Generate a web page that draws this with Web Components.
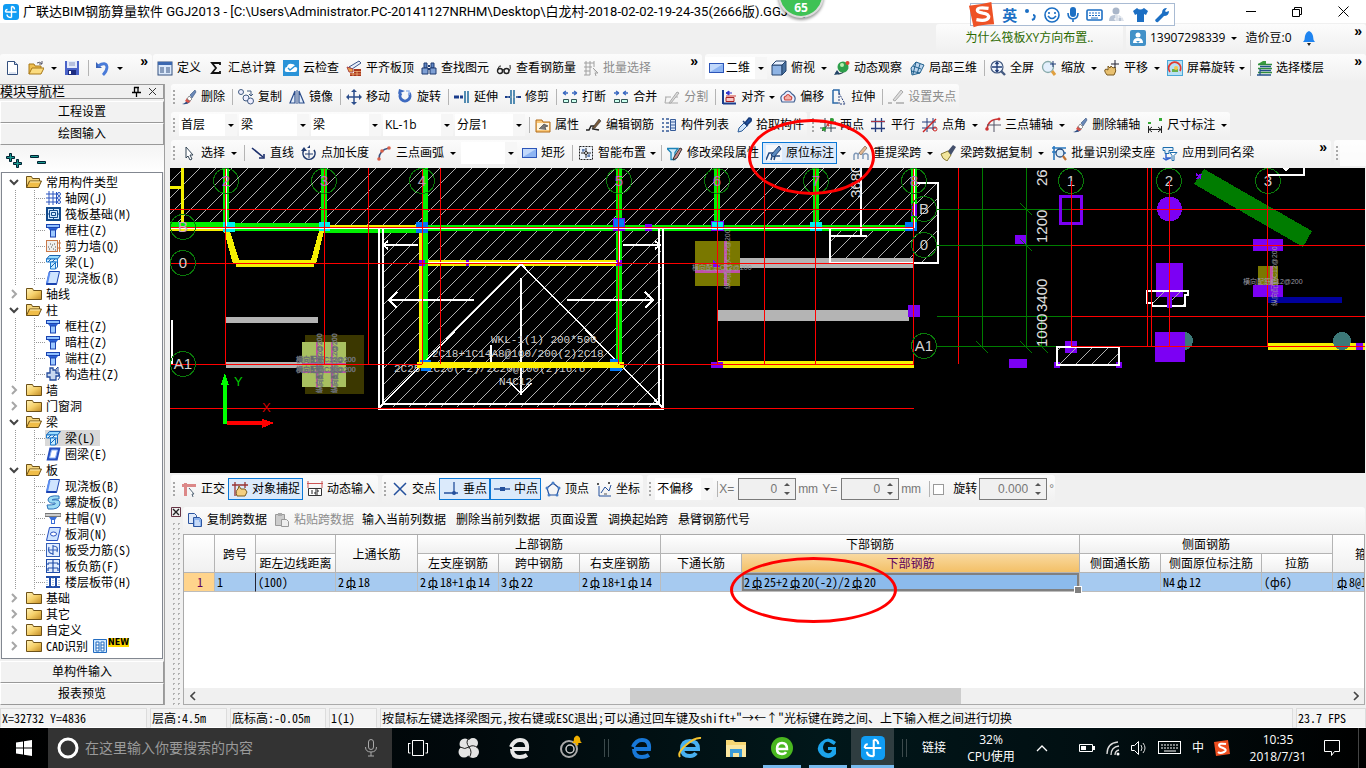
<!DOCTYPE html>
<html lang="zh-CN">
<head>
<meta charset="utf-8">
<title>广联达BIM钢筋算量软件 GGJ2013</title>
<style>
  html, body { margin: 0; height: 100%; background: #f0f0f0; }
  body { font: 12px/16px "Open Sans", "Noto Sans CJK SC", sans-serif; color: #000; overflow: hidden; }
</style>
</head>
<body>
<ggj-app></ggj-app>
<script>
/* ---------- icon set, drawn on a 16x16 grid ---------- */
const brush = '<path d="M1 15q4-1 5-4l3 2q-3 3-8 2" fill="#2a4a80"/><path d="M6 9l4 3-3 2-3-2z" fill="#d9534a"/><path d="M8 7l3 3-2 2-3-2z" fill="#fff" stroke="#555" stroke-width=".6"/><path d="M9 6l5-5 1 2-4 6z" fill="#6b89b8" stroke="#34507e" stroke-width=".6"/>';
const pencil = '<path d="M7 10l6-8 2 2-6 7-3 1z" fill="#7a5a3a" stroke="#333" stroke-width=".6"/>';
const column = '<rect x="1.5" y="2.5" width="13" height="3" fill="#8fc0ff" stroke="#1a43b0"/><path d="M3 6h10l-2 2.5h-6z" fill="#2a62d8"/><rect x="5.5" y="8" width="5" height="7" fill="#9cc8ff" stroke="#1a43b0"/>';
const slab = '<path d="M4.5 1.5h10l-3 13h-10z" fill="#cfe4ff" stroke="#1a43b0"/><path d="M2 13.5l2.500-11" stroke="#5b8df0" stroke-width="2"/><path d="M1.500 14h10" stroke="#1a43b0" stroke-width="2"/>';
const beam = '<path d="M1.500 5l3-3.500h11l-3 3.500z" fill="#9adcff" stroke="#1a62b0"/><path d="M1.500 5h11v3h-11z" fill="#e4f6ff" stroke="#1a7ad0"/><path d="M5.500 8h5v7h-5z" fill="#c9ecff" stroke="#1a7ad0"/><path d="M10.500 15l2-2V8" fill="none" stroke="#1a62b0"/><path d="M3 8l3-3M7 8l3-3M6 13l4-4" stroke="#1a62b0"/>';
const ICONS = {
  app: '<rect width="16" height="16" rx="3" fill="#109cf3"/><path d="M8.500 2.500v11M2.500 8h11M8.500 2.500q3 0 3 3M4 10.500q0 3 4.500 3M4.500 5.500q-2 0-2 2.500" fill="none" stroke="#fff" stroke-width="1.4"/>',
  file: '<path d="M3.500 1.500h7l3 3v10h-10z" fill="#fff" stroke="#34507e"/><path d="M10.500 1.500v3h3" fill="#cfdcf0" stroke="#34507e"/><path d="M5 13h7" stroke="#b8c8e4"/>',
  open: '<path d="M1 14V4h5l1 2h6v2" fill="#f0c050" stroke="#a87818"/><path d="M1 14l3-6h12l-3 6z" fill="#fbdc80" stroke="#a87818"/><path d="M9 3q3-2 5 1M14 1v3h-3" fill="none" stroke="#556"/>',
  save: '<path d="M1 1h14v14H1z" fill="#4a63c8"/><path d="M3 1h10v7H3z" fill="#e4ebfa"/><path d="M5 3h6M5 5h6" stroke="#8894c0"/><path d="M4 10h8v5H4z" fill="#1d2c80"/><path d="M5 11h2v3H5z" fill="#fff"/>',
  undo: '<path d="M2 2v6h6z" fill="#3a63b8"/><path d="M4 6q8-5 9 1q0 4-4 8" fill="none" stroke="#4a7bd8" stroke-width="2.8"/>',
  define: '<rect x="1" y="2" width="14" height="13" fill="#dbe9fb" stroke="#34507e"/><path d="M1 2h14v3H1z" fill="#3c68b0"/><path d="M3 8h4M3 10h4M3 12h4M9 8h4M9 10h4M9 12h4" stroke="#34507e"/>',
  sigma: '<path d="M12 5V3H4l4 5-4 5h8v-2" fill="none" stroke="#111" stroke-width="1.8"/>',
  cloud: '<rect width="16" height="16" fill="#2a93d8"/><path d="M4 12q-3 0-2-3q0-2 2-2q1-4 5-3q3 0 3 3q3 0 2 3q0 2-2 2z" fill="#fff"/><path d="M5 8l2 2 5-4" fill="none" stroke="#2a93d8" stroke-width="1.4"/>',
  align: '<path d="M3 7l10-6 2 2-9 6z" fill="#e8eefa" stroke="#3a5488"/><path d="M1 7l6 2v3H3z" fill="#eda64a" stroke="#a44"/><path d="M8 9h7v7H4v-3h4z" fill="#a8341c"/><path d="M4 14h11M7 13v3M11 11v5M8 11.500h7" stroke="#f8c080" stroke-width=".7"/>',
  find: '<path d="M3 3h3v5H3zM10 3h3v5h-3z" fill="#5f86c4" stroke="#1e3a70"/><path d="M1 8h6v6H1zM9 8h6v6H9z" fill="#7fa0d4" stroke="#1e3a70"/><path d="M7 9h2M7 6h2" stroke="#1e3a70" stroke-width="2"/>',
  view: '<circle cx="4" cy="11" r="2.500" fill="none" stroke="#222" stroke-width="1.4"/><circle cx="10.500" cy="11" r="2.500" fill="none" stroke="#222" stroke-width="1.4"/><path d="M6 10q1-1 2 0M2 9q1-4 3-3M13 11q2-2 1-6" fill="none" stroke="#222"/>',
  batch: '<g stroke="#a0a0a0" fill="none"><path d="M1 3h10M1 7h8M1 11h6M1 15h6M3 1v14M7 1v14M11 1v6"/><path d="M10 8l5 5h-3l1 3" fill="#ddd"/></g>',
  rect: '<rect x="1.500" y="3.500" width="14" height="9" fill="#8db4f2" stroke="#2c55b8"/><path d="M2 4h13l-13 8z" fill="#c2d9fb"/>',
  cube: '<path d="M1 5h10v10H1z" fill="#8fb4e4" stroke="#26456e"/><path d="M1 5l4-4h10l-4 4z" fill="#e9f2ff" stroke="#26456e"/><path d="M11 5l4-4v10l-4 4z" fill="#47709f" stroke="#26456e"/>',
  orbit: '<path d="M2 12q1 3 6 1l6-5" fill="none" stroke="#345" stroke-width="1.2"/><circle cx="9" cy="7" r="5.500" fill="#2f9f4b"/><circle cx="8" cy="5" r="2" fill="#b8f0b0"/><circle cx="13.500" cy="3" r="2" fill="#e04430"/><path d="M0 15l3-5 3 4z" fill="#246"/>',
  part3d: '<path d="M2 8l5-6 8 3-4 8-8 2z" fill="#bcd5ee" stroke="#20608c"/><path d="M4 6l8 3M7 2l-3 12M11 4l-3 10M2 11l9 2" stroke="#20608c" fill="none"/>',
  full: '<circle cx="7" cy="7" r="6" fill="#edf4fd" stroke="#445a80" stroke-width="1.2"/><path d="M7 2v10M2 7h10M5.500 4L7 2l1.500 2M5.500 10L7 12l1.500-2" fill="none" stroke="#223e78" stroke-width="1.3"/><path d="M11 11l4 4" stroke="#445a80" stroke-width="2.4"/>',
  zoom: '<circle cx="7" cy="7" r="5.500" fill="#e3effc" stroke="#8aa" stroke-width="1.3"/><path d="M12 1v6M9 4h6" stroke="#223e78"/><path d="M11 11l3 4" stroke="#e0a040" stroke-width="3"/>',
  pan: '<path d="M3 15q-4-5-1-6l2 1V6l2 2 1-2 2 2 2-1q2 4-1 8z" fill="#e8c070" stroke="#7a5a20"/><path d="M11 0v8M7 4h8" stroke="#223"/>',
  spin: '<rect x=".5" y=".5" width="15" height="15" fill="#b8e0f4" stroke="#48a8d8"/><path d="M3 12A6 6 0 1 1 13 11" fill="none" stroke="#e03a30" stroke-width="1.8"/><path d="M5 9h6v3H5z" fill="#6ab04a"/><circle cx="9" cy="8" r="2" fill="#f4c84a"/>',
  floors: '<path d="M2 4l5-3h3v3z" fill="#3c9c40"/><path d="M2 4.500h14M2 8.500h14M2 12.500h14" stroke="#2f8d3c" stroke-width="1.5"/><path d="M4 9v6M1 15h14M4 6.500h11M4 10.500h11" stroke="#24528c" stroke-width="1.3"/>',
  brush,
  copy: '<g fill="#eef" stroke="#405a80"><circle cx="3" cy="3" r="2.500"/><circle cx="8" cy="9" r="3"/><circle cx="12.500" cy="12" r="3"/></g><path d="M9 2h4v4M11 5l2 2 2-2" fill="none" stroke="#405a80"/>',
  mirror: '<path d="M6 2v12H1zM10 2v12h5z" fill="#e4eefb" stroke="#2c4e8c" stroke-width="1.2"/><path d="M8 1v14" stroke="#2c4e8c"/>',
  move: '<path d="M8 2v12M2 8h12" stroke="#2c4e8c" stroke-width="1.5"/><path d="M8 0l3 3H5zM8 16l3-3H5zM0 8l3-3v6zM16 8l-3-3v6z" fill="#2c4e8c"/>',
  rotate: '<path d="M4 4a5 5 0 1 0 8 0" fill="none" stroke="#3e6ac0" stroke-width="3"/><path d="M1 5l1-5 6 2z" fill="#3e6ac0"/><path d="M9 2h3v4" stroke="#9ab8ec" fill="none" stroke-width="1.5"/>',
  extend: '<path d="M0 8h9" stroke="#1a3c8c" stroke-width="3" stroke-dasharray="5 1"/><path d="M11 2v12M14 2v12" stroke="#1e6a9c" stroke-width="1.5"/>',
  trim: '<path d="M0 8h5M11 8h5" stroke="#1a3c8c" stroke-width="2"/><path d="M6 1v14M9 1v14" stroke="#1e6a9c" stroke-width="1.5"/><path d="M2 8h12" stroke="#8ab" stroke-dasharray="2 1"/>',
  brk: '<path d="M1 4h5M10 4h5M1 4l3-2M1 4l3 2M15 4l-3-2M15 4l-3 2" stroke="#3a68c0" stroke-width="1.3"/><path d="M1.500 10.500h5v3h-5zM9.500 10.500h5v3h-5z" fill="#cfe" stroke="#355"/>',
  join: '<path d="M1 4h5M10 4h5M6 4L3 2M6 4L3 6M10 4l3-2M10 4l3 2" stroke="#3a68c0" stroke-width="1.3"/><path d="M1.500 10.500h5v3h-5zM8.500 10.500h6v3h-6z" fill="#cfe" stroke="#355"/>',
  split: '<g stroke="#aaa" fill="none"><path d="M1 8h6M1 14h13M2 8l-1 6M10 8l4 0"/><path d="M5 14l8-11 2 1-8 10z" fill="#ddd"/></g>',
  left: '<path d="M2 1v14M2 14.500h13" stroke="#1a3c8c" stroke-width="2"/><path d="M5 7h10" stroke="#c33"/><path d="M5 4l3-2v4zM5 4h6" stroke="#33c" fill="#33c"/><path d="M5 8.500h8v4H5z" fill="#f8c8c8" stroke="#a22"/>',
  offset: '<path d="M2 13q-3-6 2-8q4-6 8 0q5 3 2 8z" fill="#eef" stroke="#406090" stroke-width="1.2"/><path d="M5 11q-2-3 1-4q2-3 4 0q3 1 1 4z" fill="#f6b0a8" stroke="#c8463c" stroke-width="1.2"/>',
  stretch: '<path d="M2 1h6v3M2 1v13h5" fill="none" stroke="#2c6aa8" stroke-width="1.5"/><path d="M8 4l6 11M8 4v11h6" fill="none" stroke="#28407c" stroke-dasharray="2 1"/>',
  grip: '<g stroke="#aaa"><path d="M0 14h4M8 14h8" stroke-width="1.5"/><path d="M5 11l8-10 2 2-8 9z" fill="#ddd"/></g>',
  prop: '<path d="M1 3h6l1 2h7v10H1z" fill="#fbc878" stroke="#b06a18"/><path d="M2 6h12v7H2z" fill="#fff6e0"/><path d="M4 12l5-5 4 2-3 1 1 3" fill="#777" stroke="#333" stroke-width=".6"/>',
  editbar: '<path d="M0 13h3l2-4h3l-1 3 6 1" fill="none" stroke="#222" stroke-width="1.5"/>' + pencil,
  list: '<path d="M1 2h2M5 2h3M1 6h2M5 6h3M1 10h2M5 10h3M1 14h2M5 14h3" stroke="#345a98" stroke-width="1.6"/><path d="M9.500 2.500h5v11h-5z" fill="#dce8fa" stroke="#345a98"/><path d="M10 5h4M10 8h4M10 11h4" stroke="#345a98"/>',
  pick: '<path d="M2 15l1-4 5-5 3 3-5 5z" fill="#cfe4fa" stroke="#2c5c98"/><path d="M7 4l5 5M9 6l4-5q3 0 2 3l-4 4" fill="#2456a8" stroke="#183c78" stroke-width="1.5"/>',
  twopt: '<path d="M0 5h16M0 11h16M5 1v14M11 1v14" stroke="#345" /><path d="M2 14L13 2" stroke="#333"/><circle cx="4" cy="12" r="2" fill="#2a9c30"/><circle cx="12" cy="3" r="2" fill="#2a9c30"/><path d="M7 7l2 2" stroke="#d33" stroke-width="2"/>',
  parallel: '<path d="M0 4.500h14M0 11.500h14M4.500 1v14M10.500 1v14" stroke="#243c7c" stroke-width="1.3"/><path d="M0 4.500h14" stroke="#a34"/>',
  ptangle: '<path d="M0 5h14M0 11h14M5 1v14M11 1v12" stroke="#243c7c"/><path d="M1 15L14 2" stroke="#c22" stroke-width="1.4"/><circle cx="13" cy="12" r="2" fill="none" stroke="#c22"/>',
  arcaxis: '<path d="M2 12q1-10 12-10" fill="none" stroke="#c33" stroke-width="1.5"/><path d="M2 8h14M9 3v12" stroke="#556"/><circle cx="2" cy="12" r="1.800" fill="#c33"/><circle cx="14" cy="2" r="1.500" fill="#c33"/>',
  dim: '<path d="M1.500 9v7M14.500 9v7M2 12.500h12" stroke="#222"/><path d="M5 10l-3 2.500 3 2.500M11 10l3 2.500-3 2.500" fill="none" stroke="#222"/><path d="M1 5h3v2H1zM12 1h3v3h-3z" fill="#3a3"/>',
  cursor: '<path d="M5 2l7 8H9l2 4-2 1-2-4-2 2z" fill="#fff" stroke="#345"/>',
  line: '<path d="M2 3l11 9" stroke="#1c2f6c" stroke-width="1.6"/><path d="M14 9v4h-5" fill="none" stroke="#1c2f6c" stroke-width="1.6"/>',
  ptlen: '<path d="M3 5a6 6 0 1 0 10 0" fill="none" stroke="#223c70" stroke-width="1.6"/><path d="M8 5v8M4 9h8" stroke="#223c70"/><path d="M0 6l3-4 3 4zM6 3h3V0" fill="#223c70"/>',
  arc3: '<path d="M3 14q0-9 10-11" fill="none" stroke="#3a4f7c" stroke-width="1.5"/><circle cx="3" cy="14" r="1.800" fill="#d9604a"/><circle cx="6" cy="6" r="1.800" fill="#d9604a"/><circle cx="13" cy="3" r="1.800" fill="#d9604a"/>',
  smart: '<rect x="1.500" y="1.500" width="13" height="13" fill="#eef4fc" stroke="#222" stroke-dasharray="2 1"/><path d="M8 3v10M3 8h10" stroke="#222"/><path d="M5 4v3M11 9v3M4 5h3M9 11h3" stroke="#335a9c"/><circle cx="8" cy="8" r="1.500" fill="#fff" stroke="#222"/>',
  beamedit: '<path d="M0 3.500h11l-3 4v7H4v-7z" fill="#d4ecfa" stroke="#1c84b8" stroke-width="1.3"/><path d="M7 12l6-9 2 1-5 9-4 2z" fill="#c88" stroke="#333"/>',
  insitu: '<path d="M0 0h16v16H0z" fill="#f4f7fb"/><path d="M0 15l3-7h4l-2 7M8 15l1-4h5" fill="none" stroke="#234a80" stroke-width="1.5"/><path d="M5 10l8-9 2 3-7 8z" fill="#5a8ac0" stroke="#1c3d70"/>',
  respan: '<path d="M1 15v-5q1-3 4-1v5M5 10q2-4 5-1v5M10 10q3-3 5 0v5" fill="none" stroke="#8099b8" stroke-width="1.5"/><path d="M6 8l6-7 2 2-6 7z" fill="#e4b890" stroke="#987"/>',
  broom: '<path d="M1 9l7-3 3 4-4 6q-5-2-6-7" fill="#f2e69c" stroke="#887a30"/><path d="M8 6l5-6 3 2-5 8z" fill="#44506c"/>',
  recog: '<path d="M1 3h14M1 7h5M11 8h4M3 1v14" stroke="#2878c0" stroke-width="1.6"/><circle cx="9" cy="8" r="4" fill="#dcecf8" stroke="#244c80" stroke-width="1.3"/><path d="M12 11l3 4" stroke="#c07030" stroke-width="2.2"/>',
  apply: '<path d="M1 2.500h10v3H7v3H3v-3H1z" fill="#e4f0fa" stroke="#1c6cac"/><path d="M8 7.500h7l-3 3v5h-2v-5z" fill="#fff" stroke="#1c6cac"/><path d="M4 9v4h5M1 13l3 2 4-2" stroke="#3566d0" fill="none" stroke-width="1.5"/>',
  ortho: '<path d="M1 4.500h14M4.500 2v13" stroke="#dc8888" stroke-width="3"/><path d="M8 7l5 6h-2l1 3" fill="#fff" stroke="#567"/>',
  snap: '<path d="M0 4h16M3 1v14M13 1v6" stroke="#933" stroke-width="1.3"/><path d="M5 15q-2-5 1-7l1-3 2 3h4l2 3-2 4z" fill="#f4cf80" stroke="#7a5a20"/>',
  dyn: '<path d="M0 2.500h16M1 0v7M15 0v7" stroke="#c55"/><path d="M1.500 7.500h13v7h-13z" fill="#fff" stroke="#333"/><path d="M5 9v4M8 9h3v2H8v2h3" fill="none" stroke="#222"/>',
  cross: '<path d="M2 2l12 12M14 2L2 14" stroke="#24509c" stroke-width="1.5"/>',
  perp: '<path d="M1 12h14" stroke="#24509c" stroke-width="1.5"/><path d="M11 1v11" stroke="#24509c" stroke-width="1.3"/><circle cx="11" cy="12" r="2" fill="#24509c"/>',
  mid: '<path d="M0 8h16" stroke="#24509c" stroke-width="1.4"/><path d="M6 6h5v4H6z" fill="#24509c"/>',
  penta: '<path d="M8 2l6 5-2 7H4L2 7z" fill="none" stroke="#24509c" stroke-width="1.2"/><g fill="#4a80c8"><circle cx="8" cy="2" r="1.500"/><circle cx="14" cy="7" r="1.500"/><circle cx="2" cy="7" r="1.500"/><circle cx="4" cy="14" r="1.500"/><circle cx="12" cy="14" r="1.500"/></g>',
  coord: '<path d="M3 5v10h12" fill="none" stroke="#24509c"/><path d="M5 12l4-6 4 4 2-6" fill="none" stroke="#24509c"/><path d="M1 2l2 2M3 2L1 4M12 1l2 2M14 1l-2 2M8 13h3" stroke="#555"/>',
  pages: '<path d="M1.500 1.500h6l2 2v8h-8z" fill="#dfeafa" stroke="#2c55a0"/><path d="M6.500 5.500h6l2 2v7h-8z" fill="#8db4ee" stroke="#2c55a0"/><path d="M8 9h4M8 11h5M8 13h5" stroke="#fff"/>',
  paste: '<path d="M1.500 2.500h9v11h-9z" fill="#ccc" stroke="#999"/><path d="M4 1h4v3H4z" fill="#aaa"/><path d="M7.500 7.500h5l2 2v5h-7z" fill="#eee" stroke="#999"/>',
  folder: '<defs><linearGradient id="g" x1="0" y1="0" x2="1" y2="1"><stop offset="0" stop-color="#fff2b8"/><stop offset=".5" stop-color="#f5cf68"/><stop offset="1" stop-color="#c08a24"/></linearGradient></defs><path d="M.5 13.500v-11h6l1 2h8v9z" fill="url(#g)" stroke="#6e5218"/>',
  folderopen: '<path d="M.5 13.500v-11h5l1 2h7v3" fill="#f6d67c" stroke="#6e5218"/><path d="M.5 13.500l3-6.500h12l-3 6.500z" fill="#f0bd48" stroke="#6e5218"/><path d="M4 8h10" stroke="#fdeeb4"/>',
  axis: '<path d="M4 1v14M8 1v14M1 4h14M1 8h13M1 12h12M11.500 2v12" stroke="#2a54c0" fill="none"/><circle cx="14" cy="4" r="1.500" fill="#fff" stroke="#2a54c0"/><circle cx="14" cy="8" r="1.500" fill="#fff" stroke="#2a54c0"/><circle cx="14" cy="12" r="1.500" fill="#fff" stroke="#2a54c0"/>',
  raft: '<rect x="2" y="2" width="13" height="12" fill="#d5eaff" stroke="#124a8c" stroke-width="2"/><path d="M4.500 4.500h8v7h-8zM6.500 6.500h4v3h-4zM2 8h3M12 8h3M8.500 1v3M8.500 12v3" fill="none" stroke="#124a8c"/>',
  column, slab, beam,
  wall: '<rect x="1.500" y="2.500" width="11" height="11" fill="#eee" stroke="#c87848"/><path d="M4 11h1M6 9h1M8 11h1M9 6h1M5 6h1M10 9h1M7 7h1M10 12h1M3 9h1" stroke="#555"/><path d="M14.500 2v12M13 5h3M13 10h3" stroke="#c87848"/>',
  gz: '<path d="M5 2h3v2h3v3h3v3h-3v4H5v-3H2V7h3z" fill="#c8d8f0" stroke="#264c9c" stroke-width="1.3"/><path d="M11 3l2-2v5M14 8l1 3-2 3" stroke="#264c9c" fill="none"/>',
  ring: '<path d="M4.500 1.500h11l-3 13h-11z" fill="#264fc0"/><path d="M6.500 4h6l-2 8h-6z" fill="#fff" stroke="#88b0f8"/>',
  spiral: '<path d="M14 2Q3 1 3 6q1 4 7 3q2 2-8 2l1 4q12 1 12-6q0-4-8-3q0-1 7-1z" fill="#9fdcf4" stroke="#2c70b8"/>',
  cap: '<path d="M0 3.500h16v3H0z" fill="#ccc" stroke="#777"/><path d="M4 7h8l-2 3v4H6v-4z" fill="#3a6ed8"/><path d="M7 10h2v3H7z" fill="#fff"/>',
  hole: '<path d="M4.500 1.500h11l-3 13h-11z" fill="#cfe4ff" stroke="#264fc0"/><ellipse cx="8.500" cy="8" rx="3" ry="2" fill="#fff" stroke="#264fc0"/>',
  rebar: '<rect x="1.500" y="1.500" width="13" height="13" fill="#e4efff" stroke="#3560b8"/><path d="M8 3v10M3 8h10M4 5q-2 6 4 7M8 4q6 0 4 6" fill="none" stroke="#3560b8" stroke-width="1.2"/>',
  negbar: '<rect x="1.500" y="1.500" width="13" height="13" fill="#e4efff" stroke="#1f4ca8"/><path d="M8 2v12M3 5h10M3 10h10M3 5v2M13 5v2M3 10v3M13 10v3" fill="none" stroke="#1f4ca8" stroke-width="1.2"/>',
  band: '<path d="M1 3h14M1 13h14" stroke="#1f4ca8" stroke-width="2"/><path d="M5 3v10M11 3v10" stroke="#1f4ca8" stroke-width="2"/><path d="M2 6v6M8 4v9M14 6v6" stroke="#69c" stroke-dasharray="1 1"/>',
  bell: '<path d="M2 12q2-2 2-6q1-4 4-5q3 1 4 5q0 4 2 6z" fill="#1f84f0"/><path d="M6 13h4l-2 3z" fill="#222"/>',
  user: '<rect width="16" height="16" rx="2" fill="#4291c8"/><circle cx="8" cy="5" r="2.500" fill="#fff"/><path d="M3 13q0-5 5-5t5 5z" fill="#fff"/><path d="M6 11h4l-2 2z" fill="#4291c8"/>',
  cad: '<path d="M1.500 1.500h13v13h-13z" fill="#cfe8ff" stroke="#246cc0"/><path d="M4 4h3v9H4zM9 4h3v9H9z" fill="#fff" stroke="#246cc0"/><path d="M4 7h3M4 10h3M9 7h3M9 10h3" stroke="#246cc0"/>'
};
const svg = (name, size = 16) => `<svg width="${size}" height="${size}" viewBox="0 0 16 16" aria-hidden="true">${ICONS[name] || ''}</svg>`;

/* Base class: attaches the shadow root with the element's own styles and markup. */
class Part extends HTMLElement {
  connectedCallback() {
    if (this.shadowRoot) return;
    const t = document.createElement('template');
    t.innerHTML = `<style>*{box-sizing:border-box}svg{display:block;flex:none}button,input,select{font:inherit;color:inherit;margin:0}button{border:0;background:none;padding:0}${this.css()}</style>${this.html()}`;
    this.attachShadow({ mode: 'open' }).append(t.content.cloneNode(true));
  }
}
const define = (name, css, html) => customElements.define(name, class extends Part {
  css() { return typeof css === 'function' ? css(this) : css; }
  html() { return typeof html === 'function' ? html(this) : html; }
});
/* half-width Latin for the system-font areas */
const SYS = 'font-family:"Noto Sans CJK SC",sans-serif;font-feature-settings:"hwid";';

/* ---------- toolbar parts ---------- */
define('tool-strip', `
  :host{display:flex;align-items:center;min-width:0;height:26px;border-radius:3px;background:linear-gradient(#fcfcfc,#f0f0f0);white-space:nowrap}
  .grip{width:6px;height:16px;flex:none;background:radial-gradient(circle,#a8a8a8 1px,transparent 1px) 0 0/6px 4px}
  .more{margin-left:auto;padding-right:4px;align-self:flex-start;font:bold 14px/14px "Liberation Sans",sans-serif}`,
  el => `${el.hasAttribute('grip') ? '<span class="grip"></span>' : ''}<slot></slot>${el.hasAttribute('more') ? '<button class="more" aria-label="更多">»</button>' : ''}`);

define('tool-item', `
  :host{display:flex;align-items:center;flex:none;height:24px}
  .b{display:flex;align-items:center;gap:4px;height:22px;padding:0 3px 0 4px}
  .b.only{padding:0 4px}.b.text{padding:0 5px}
  :host([active]) .b{background:#dbeafb;box-shadow:inset 0 0 0 1px #0a78d7}
  :host([disabled]) .b{color:#8c8c8c}
  .c{width:12px;height:22px;padding:0 3px}
  .c i{display:block;border:3px solid transparent;border-top-color:#000;border-bottom:0;width:6px}
  :host([tight]) .c{width:8px;padding:0 1px}`,
  el => {
    const icon = el.getAttribute('icon'), text = el.textContent.trim();
    return `<button class="b ${!text ? 'only' : !icon ? 'text' : ''}" ${el.hasAttribute('disabled') ? 'disabled' : ''} ${text ? '' : `aria-label="${el.getAttribute('name')}"`}>${icon ? svg(icon) : ''}${text ? '<span><slot></slot></span>' : ''}</button>${el.hasAttribute('caret') || el.hasAttribute('tight') ? '<button class="c" aria-label="展开"><i></i></button>' : ''}`;
  });

define('tool-sep', `:host{display:block;flex:none;width:6px;height:16px;background:linear-gradient(#b4b4b4,#b4b4b4) 4px 0/1px 100% no-repeat}`, '');

define('tool-combo', `
  :host{display:flex;flex:none;align-items:center;width:70px;height:22px;margin-left:2px;background:#fff}
  :host([size="s"]){width:58px}
  :host([size="xs"]){width:56px}
  svg{margin:0 0 0 3px}
  select{flex:1;min-width:0;height:22px;border:0;padding:0 0 0 2px;background:none;appearance:none;outline:0}
  i{width:12px;flex:none;height:22px;background:#f6f6f6;display:grid;place-items:center}
  i::after{content:"";border:3px solid transparent;border-top-color:#000;border-bottom:0}`,
  el => `${el.hasAttribute('icon') ? svg(el.getAttribute('icon')) : ''}<select aria-label="${el.getAttribute('name')}"><option>${el.getAttribute('value')}</option></select><i></i>`);

define('num-field', `
  :host{display:flex;flex:none;align-items:center;color:#777;font:12px/16px "Liberation Sans","Noto Sans CJK SC",sans-serif}
  label{display:flex;align-items:center;gap:2px}
  .w{display:flex;width:58px;height:22px;border:1px solid #7a7a7a;background:#f0f0f0}
  :host([wide]) .w{width:68px}
  input{flex:1;min-width:0;border:0;background:none;text-align:right;padding:0 2px;outline:0}
  .s{width:16px;display:flex;flex-direction:column;justify-content:space-between;align-items:center;padding:4px 0}
  .s b{border:3px solid transparent;border-bottom:3px solid #555;border-top:0}.s b+b{border-top:3px solid #555;border-bottom:0}
  .l{min-width:17px}.u{min-width:24px}:host([wide]) .l{min-width:0}:host([wide]) .u{min-width:6px}`,
  el => `<label><span class="l">${el.getAttribute('label')}</span><span class="w"><input type="text" value="${el.getAttribute('value')}"><span class="s"><b></b><b></b></span></span><span class="u">${el.getAttribute('unit')}</span></label>`);

/* ---------- title bar ---------- */
define('title-bar', `
  :host{display:flex;align-items:center;height:23px;background:#fff;padding-left:3px;position:relative;white-space:nowrap}
  span{padding-left:4px;flex:1;font-family:Roboto,"Noto Sans CJK SC",sans-serif;font-size:13px}
  .win{display:flex}.win button{width:46px;height:23px;display:grid;place-items:center}
  .ball{position:absolute;left:778px;top:-28px;width:46px;height:46px;border-radius:50%;background:#3fc255;border:2px solid #dcdcdc;box-shadow:0 2px 3px #0006;color:#fff;font:bold 12px/14px "Open Sans",sans-serif;text-align:center;padding:27px 0 0}`,
  `${svg('app')}<span>广联达BIM钢筋算量软件 GGJ2013 - [C:\\Users\\Administrator.PC-20141127NRHM\\Desktop\\白龙村-2018-02-02-19-24-35(2666版).GGJ12]</span>
  <div class="win"><button aria-label="最小化"><svg width="10" height="10"><path d="M0 4.500h10" stroke="#000"/></svg></button><button aria-label="还原"><svg width="10" height="10"><path d="M.5 2.500h7v7h-7zM2.500 2.500v-2h7v7h-2" fill="none" stroke="#000"/></svg></button><button aria-label="关闭"><svg width="11" height="11"><path d="M.5.5l10 10M10.500.5l-10 10" stroke="#000"/></svg></button></div>
  <div class="ball">65</div>`);

define('ime-bar', `
  :host{position:absolute;left:970px;top:3px;width:205px;height:23px;background:#fff;border:1px solid #a9bbd3;display:block;z-index:2}
  div{display:flex;align-items:center;justify-content:space-between;height:21px;padding:0 4px 0 0}
  .logo{margin:0 0 0 -3px}
  b{font:bold 15px/20px "Noto Sans CJK SC",sans-serif;color:#1c6fc4}`,
  `<div><svg class="logo" width="28" height="28" viewBox="0 0 30 28"><path d="M1 4q12-1 24-4l3 24q-12 0-22 3z" fill="#ee5226"/><path d="M22 7q-12-2-12 2q0 2 6 3q7 1 6 5q-2 4-13 2" fill="none" stroke="#fff" stroke-width="3.5"/></svg>
  <b>英</b><svg width="14" height="16"><circle cx="4" cy="4" r="2" fill="#1c6fc4"/><path d="M10 8q3 0 1 4l-2 1" stroke="#1c6fc4" stroke-width="2" fill="none"/></svg>
  <svg width="16" height="16"><circle cx="8" cy="8" r="7" fill="none" stroke="#1c6fc4" stroke-width="1.6"/><path d="M5 5v2M11 5v2M4 9q4 5 8 0" stroke="#1c6fc4" stroke-width="1.6" fill="none"/></svg>
  <svg width="14" height="16"><rect x="4" y="0" width="6" height="10" rx="3" fill="#1c6fc4"/><path d="M2 6q0 6 5 6t5-6M7 12v3" fill="none" stroke="#1c6fc4" stroke-width="1.6"/></svg>
  <svg width="17" height="12"><rect x="1" y="1" width="15" height="10" rx="1" fill="none" stroke="#1c6fc4" stroke-width="1.6"/><path d="M3 4h11M3 6.500h11" stroke="#1c6fc4" stroke-dasharray="2 1"/><path d="M5 9h7" stroke="#1c6fc4"/></svg>
  <svg width="17" height="15"><circle cx="7" cy="4" r="3.500" fill="#a9b6c9"/><path d="M0 14q0-7 7-6q7 0 8 6z" fill="#b7c3d4"/><path d="M6 9h4v2H6v2h4M15 9h-3v2h3v2h-3" stroke="#fff" fill="none"/></svg>
  <svg width="15" height="14"><path d="M0 3l4-3q3 3 7 0l4 3-2 4-2-1v8H4V6L2 7z" fill="#1c6fc4"/></svg>
  <svg width="16" height="16"><path d="M1 13l7-7q0-5 5-5l-2 3 1 1 3-1q0 5-5 5l-6 6q-2 1-3-2" fill="#1c6fc4"/></svg></div>`);

/* ---------- module navigator ---------- */
const TREE = [
  ['o', '常用构件类型'], ['axis', '轴网(J)'], ['raft', '筏板基础(M)'], ['column', '框柱(Z)'], ['wall', '剪力墙(Q)'], ['beam', '梁(L)'], ['slab', '现浇板(B)'],
  ['c', '轴线'], ['o', '柱'], ['column', '框柱(Z)'], ['column', '暗柱(Z)'], ['column', '端柱(Z)'], ['gz', '构造柱(Z)'],
  ['c', '墙'], ['c', '门窗洞'], ['o', '梁'], ['beam', '梁(L)', 1], ['ring', '圈梁(E)'],
  ['o', '板'], ['slab', '现浇板(B)'], ['spiral', '螺旋板(B)'], ['cap', '柱帽(V)'], ['hole', '板洞(N)'], ['rebar', '板受力筋(S)'], ['negbar', '板负筋(F)'], ['band', '楼层板带(H)'],
  ['c', '基础'], ['c', '其它'], ['c', '自定义'], ['c', 'CAD识别', 0, 1]
];
const chev = open => `<svg width="10" height="10"><path d="${open ? 'M1 3l4 4 4-4' : 'M3 1l4 4-4 4'}" fill="none" stroke="${open ? '#444' : '#a6a6a6'}" stroke-width="2"/></svg>`;
define('nav-tree', `
  :host{display:block;flex:1;min-height:0;background:#fff;border:1px solid #828790;padding:1px 0 0 1px;margin:0 1px;overflow:hidden;${SYS}}
  ul{list-style:none;margin:0;padding:0}
  li{display:flex;align-items:center;height:16px;padding-left:6px}
  li.k{padding-left:42px;background:repeating-linear-gradient(#999 0 1px,transparent 1px 2px) 12px 0/1px 100% no-repeat,repeating-linear-gradient(#999 0 1px,transparent 1px 2px) 31px 0/1px 100% no-repeat,repeating-linear-gradient(90deg,#999 0 1px,transparent 1px 2px) 31px 8px/12px 1px no-repeat}
  .f{margin:0 4px 0 7px}
  a{color:inherit;text-decoration:none;line-height:16px;display:flex;gap:4px}
  a.s{background:#d9d9d9;padding-right:5px}
  em{font:bold 8px/9px "DejaVu Sans",sans-serif;background:#ffd800;align-self:flex-start}
  .x{margin-left:4px}`,
  () => `<ul>${TREE.map(([i, t, s, n]) => i === 'o' || i === 'c'
    ? `<li>${chev(i === 'o')}<span class="f">${svg(i === 'o' ? 'folderopen' : 'folder')}</span><a href="#">${t}</a>${n ? `<span class="x">${svg('cad')}</span><em>NEW</em>` : ''}</li>`
    : `<li class="k"><a href="#" class="${s ? 's' : ''}">${svg(i)}<span>${t}</span></a></li>`).join('')}</ul>`);

define('nav-panel', `
  :host{display:flex;flex-direction:column;border-right:1px solid #a0a0a0;background:#f0f0f0}
  header{display:flex;align-items:center;height:15px;border:1px solid #999;border-left:0;font-size:13px;line-height:13px}
  header span{flex:1}header svg{margin-right:6px}
  button{height:22px;flex:none;border:1px solid #999;border-top-color:#fff;border-left-color:#fff;background:#f2f2f2;line-height:20px}
  .top{margin-top:2px}
  .pm{height:27px;flex:none;padding:7px 0 0 5px;background:linear-gradient(#f4f4f4,#fff)}
  .end{margin-top:2px}`,
  `<header><span>模块导航栏</span><svg width="11" height="11"><path d="M3.500 1v5M7 1v5M3 1.500h5M1 6.500h9M5.500 7v4" stroke="#000" stroke-width="1.3"/></svg><svg width="9" height="9"><path d="M1 1l7 7M8 1L1 8" stroke="#333"/></svg></header>
  <button class="top">工程设置</button><button>绘图输入</button>
  <div class="pm"><svg width="44" height="18"><g fill="#1a9a90" stroke="#023"><path d="M4.500 1.500h2v3h3v2h-3v3h-2v-3h-3v-2h3zM11.500 7.500h2v3h3v2h-3v3h-2v-3h-3v-2h3z"/><path d="M25.500 3.500h8v2h-8zM32.500 9.500h8v2h-8z"/></g></svg></div>
  <nav-tree></nav-tree>
  <button class="end">单构件输入</button><button>报表预览</button>`);

/* ---------- drawing area: scene coordinates have their origin 170,168 up-left of the viewport ---------- */
const R = (x, y, x2, y2, f) => `<rect x="${x}" y="${y}" width="${x2 - x}" height="${y2 - y}" fill="${f}"/>`;
const H = (y, a, b, c = 'red') => `<path d="M${a} ${y}.5H${b}" stroke="${c}"/>`;
const V = (x, a, b, c = 'red') => `<path d="M${x}.5 ${a}V${b}" stroke="${c}"/>`;
const AX = (x, y, t, c = '#d0d0d0') => `<circle cx="${x}" cy="${y}" r="12.5" fill="none" stroke="#0a7a0a"/><text x="${x}" y="${y + 5}" text-anchor="middle" font-size="15" fill="${c}">${t}</text>`;
const DIM = (x, y, t) => `<text transform="translate(${x} ${y}) rotate(-90)" font-size="15" fill="#e0e0e0">${t}</text>`;
const TINY = (x, y, t, r = 0) => `<text transform="translate(${x} ${y}) rotate(${r})" font-size="7" fill="#9a9aa2">${t}</text>`;
const G = '#00f000', Y = '#f4f000', P = '#7c00f4', C = '#00f0f0', B = '#0078f8', M = '#c050a8', GR = '#b4b4b4', DG = '#007c00', VI = '#c468c4';
const scene = () => [
  '<rect x="170" y="168" width="743" height="57" fill="url(#h)"/><rect x="383" y="229" width="278" height="178" fill="url(#h)"/><rect x="830" y="184" width="108" height="78" fill="url(#h)"/>',
  R(181, 168, 184, 225, Y), R(170, 186, 181, 189, Y),
  R(170, 222, 227, 228, G), R(170, 228, 227, 231, Y), R(226, 223, 325, 232, G), R(325, 225, 422, 228, Y), R(325, 229, 425, 233, G), R(425, 225, 914, 231, G),
  R(223, 168, 229, 224, G), R(321, 168, 327, 226, G), R(422, 168, 428, 363, G), R(616, 168, 622, 363, G), R(714, 168, 720, 222, G), R(813, 168, 819, 222, G), R(911, 168, 917, 225, G),
  `<path d="M224 231h6l9 29h72l8-29h5l-8 33h-2v3h-78v-3h-3z" fill="${Y}"/><path d="M230 231l9 29h72l8-29z" fill="#000"/>`,
  R(419, 231, 423, 363, Y), R(428, 260, 617, 266, Y),
  R(226, 317, 318, 323, GR), R(226, 362, 303, 368, GR), R(740, 258, 914, 268, GR), R(718, 310, 909, 321, GR), R(718, 361, 914, 368, Y),
  R(305, 335, 364, 394, '#3b3700'), R(302, 342, 346, 387, '#a8c060'), R(316, 342, 318, 387, M), R(331, 342, 333, 387, M), R(302, 363, 346, 365, M), R(302, 371, 346, 373, M),
  '<g stroke="#666a70" stroke-width=".4">', TINY(296, 362, '横向配筋C12@200'), TINY(296, 372, '横向配筋C12@200'), TINY(322, 393, '纵向配筋C12@200', -90), TINY(337, 393, '纵向配筋C12@200', -90), '</g>',
  R(695, 241, 740, 286, '#7a7800'), R(724, 241, 727, 286, M), R(695, 270, 740, 273, M), TINY(692, 270, '横向配筋C12@200'), TINY(730, 289, '纵向配筋C12@200', -90),
  /* stair outline and slopes */
  '<g fill="none" stroke="#fff" stroke-width="2"><path d="M379 229V409H663V229M383 229V404H659V229"/><path d="M384 245h34M388 241l-5 4 5 4M390 300h84M397 292l-8 8 8 8M567 300h84M645 292l8 8-8 8M623 245h36M655 241l5 4-5 4M521 278v115M491 345v17"/><path d="M861 168v69M830 236h37M830 229v34h108V183h-21"/></g>',
  '<path d="M379 408l4-4 138-140 138 140 4 4M511 383l10 11 10-11" fill="none" stroke="#fff" stroke-width="1.5"/>',
  '<g font-family="Liberation Mono, monospace" font-size="11" fill="#d0d0d0"><text x="491" y="343">WKL-1(1) 200*500</text><text x="432" y="357">2C18+1C14A8@100/200(2)2C18</text><text x="394" y="372">2C25+2C20(-2)/2C20@100(2)16.6</text><text x="499" y="385">N4C12</text></g>',
  R(417, 362, 624, 368, '#fff000'),
  R(223, 222, 235, 232, C), R(319, 222, 330, 231, C), R(416, 222, 428, 233, B), R(613, 218, 625, 231, P), R(614, 219, 624, 229, B), R(645, 224, 652, 231, P), R(711, 221, 724, 231, P), R(712, 222, 723, 230, C), R(810, 222, 822, 231, C), R(905, 222, 917, 231, B), R(911, 204, 917, 216, P), R(908, 305, 920, 317, P), R(711, 362, 723, 368, P), R(419, 260, 425, 266, P), R(466, 260, 469, 266, P), R(616, 260, 622, 266, P), R(420, 360, 431, 362, B), R(610, 359, 619, 362, B), R(421, 368, 431, 371, B), R(610, 368, 622, 371, B),
  '<path d="M713 260l7 7h-7z" fill="#7c00f4"/>',
  /* axes of the main plan */
  H(209, 170, 914), H(227, 170, 914), H(228, 170, 914, '#fff'), H(263, 170, 914), H(364, 170, 422), H(364, 620, 914), H(408, 170, 914),
  V(225, 168, 364), V(324, 168, 364), V(368, 168, 364), V(422, 168, 364), V(440, 168, 364), V(618, 168, 364), V(717, 168, 364), V(764, 168, 364), V(815, 168, 364), V(913, 168, 364), V(958, 168, 364),
  V(226, 168, 226, '#fff'), V(619, 231, 262, '#fff'), V(914, 168, 228, '#fff'), V(172, 320, 364, '#fff'), V(171, 320, 364, '#fff'), H(262, 428, 617, '#fff'),
  AX(226, 181, '2', VI), AX(324, 181, '3', VI), AX(422, 181, '4', '#b0a0b0'), AX(619, 181, '5', VI), AX(717, 181, '6', VI), AX(816, 181, '7', VI), AX(914, 181, '8', VI),
  AX(183, 227, 'B', '#c8a0c8'), AX(183, 263, '0'), AX(183, 364, 'A1'), AX(924, 209, 'B'), AX(924, 245, '0'), AX(924, 346, 'A1'),
  DIM(861, 198, '3680'),
  /* second plan */
  H(209, 937, 1071, DG), H(245, 937, 1071, DG), H(316, 937, 1071, DG), H(346, 937, 1071, DG), V(982, 168, 346, DG), V(1026, 168, 346, DG), V(1041, 316, 346, DG),
  R(1015, 235, 1026, 244, P), R(1009, 359, 1027, 368, P),
  `<path d="M1020 203l12 12M1020 239l12 12M976 341l12 12M1020 341l12 12M1036 341l12 12" stroke="${DG}"/>`,
  DIM(1047, 186, '26'), DIM(1047, 243, '1200'), DIM(1047, 312, '3400'), DIM(1047, 347, '1000'),
  AX(1071, 181, '1'), AX(1169, 181, '2'), AX(1268, 181, '3'),
  '<circle cx="1184" cy="341" r="9" fill="#3c7878"/><path d="M1204 169l108 62-9 16-109-63z" fill="#007c00"/><path d="M1196 174l5 4M1197 179l4-5" stroke="#7c00f4" stroke-width="2"/>',
  `<rect x="1060.5" y="196.5" width="21" height="27" fill="none" stroke="${P}" stroke-width="3"/><circle cx="1169.5" cy="209" r="12.5" fill="${P}"/>`,
  R(1253, 239, 1283, 251, P), R(1156, 263, 1183, 297, P), R(1253, 285, 1283, 297, P), R(1258, 266, 1278, 285, '#7a7800'), R(1270, 266, 1273, 285, M), R(1268, 297, 1342, 303, '#00009c'), R(1155, 332, 1185, 362, P), R(1268, 343, 1366, 350, Y),
  '<circle cx="1342" cy="341" r="9" fill="#3c7878"/>', R(1356, 343, 1363, 350, P), R(1065, 341, 1077, 353, P),
  R(1054, 362, 1060, 368, P), R(1116, 362, 1122, 368, P),
  '<g stroke="#fff" stroke-width="2" ><rect x="1057" y="347" width="62" height="18" fill="url(#h)"/><path d="M1147 291h41v4h-3v11h-33v-3h-5z" fill="url(#h)"/><path d="M1268 175h36v-8" fill="none"/></g><path d="M1282 168h8l-4 3z" fill="#fff"/>', R(1167, 297, 1172, 308, P),
  H(209, 1071, 1366), H(245, 1071, 1366), H(316, 1071, 1366), H(346, 1071, 1366), V(1071, 181, 346), V(1147, 168, 346), V(1151, 168, 346), V(1169, 181, 346), V(1267, 168, 346),
  TINY(1243, 284, '横向配筋C12@200'), TINY(1277, 306, '纵向配筋C12@200', -90),
  /* axis gizmo */
  '<path d="M225 424V384" stroke="#0f0" stroke-width="4"/><path d="M225 373l4 12h-8z" fill="#0f0"/><path d="M227 423h37" stroke="red" stroke-width="4"/><path d="M274 423l-12-4v9z" fill="red"/><text x="234" y="386" font-size="13" fill="#0c0">Y</text><text x="262" y="412" font-size="13" fill="#c00">X</text>'
].join('');
define('cad-canvas', `
  :host{display:block;flex:1;min-height:0;margin-right:1px;background:#000;overflow:hidden}
  svg{width:100%;height:100%;shape-rendering:crispEdges;font-family:"Liberation Sans","Noto Sans CJK SC",sans-serif}`,
  () => `<svg role="img" aria-label="绘图区"><defs><pattern id="h" width="16" height="16" patternUnits="userSpaceOnUse"><path d="M-1 17L17-1" stroke="#b0b0b0"/></pattern></defs><g transform="translate(-170 -168)">${scene()}</g></svg>`);

/* ---------- rebar table ---------- */
const f = '<u>ф</u>';
define('span-table', `
  :host{display:flex;flex-direction:column;flex:1;min-height:0;background:#fff;border:1px solid #aaa;overflow:hidden;${SYS}}
  .v{flex:1;min-height:0;overflow:hidden}
  table{border-collapse:separate;border-spacing:0;table-layout:fixed;width:1218px;line-height:16px;white-space:nowrap}
  th{height:19px;padding:0;font-weight:400;background:linear-gradient(#fff,#f0f0f0);border:solid #b4b4b4;border-width:0 1px 1px 0;text-align:center}
  td{height:19px;padding:0 0 0 2px;background:#a6caf0;border:solid #bcbcbc;border-width:0 1px 1px 0;position:relative}
  td.n{background:#ffd48c;color:#60005c;text-align:center}
  th.hot{background:linear-gradient(#f9d9a0,#f3c067);color:#60005c}
  td.m{border-right-color:#223}
  td.cur{background:#8cbbec;box-shadow:inset 0 0 0 2px #808080}
  td.cur::after{content:"";position:absolute;right:-3px;bottom:-3px;width:6px;height:6px;background:#808080;border:1px solid #fff;z-index:1}
  u{text-underline-offset:0;text-decoration-thickness:1px;font-feature-settings:normal;display:inline-block;width:14px;text-align:center}
  .bar{display:flex;align-items:center;height:16px;flex:none;background:#f0f0f0}
  .bar button{width:17px;display:grid;place-items:center}
  .t{flex:1;display:flex;height:16px}.t i{background:#cdcdcd;margin-left:37.4%;width:28.9%}`,
  `<div class="v"><table><colgroup>${[31,41,80,82,81,81,81,81,338,81,101,71,69].map(w => `<col style="width:${w}px">`).join('')}</colgroup>
  <thead><tr><th rowspan="2"></th><th rowspan="2">跨号</th><th></th><th rowspan="2">上通长筋</th><th colspan="3">上部钢筋</th><th colspan="2">下部钢筋</th><th colspan="3">侧面钢筋</th><th rowspan="2">箍筋</th></tr>
  <tr><th>距左边线距离</th><th>左支座钢筋</th><th>跨中钢筋</th><th>右支座钢筋</th><th>下通长筋</th><th class="hot">下部钢筋</th><th>侧面通长筋</th><th>侧面原位标注筋</th><th>拉筋</th></tr></thead>
  <tbody><tr><td class="n">1</td><td class="m">1</td><td>(100)</td><td>2${f}18</td><td>2${f}18+1${f}14</td><td>3${f}22</td><td>2${f}18+1${f}14</td><td></td><td class="cur">2${f}25+2${f}20(-2)/2${f}20</td><td></td><td>N4${f}12</td><td>(ф6)</td><td>${f}8@100</td></tr></tbody></table></div>
  <div class="bar"><button aria-label="向左"><svg width="6" height="10"><path d="M5 1L1 5l4 4" fill="none" stroke="#444" stroke-width="1.6"/></svg></button><span class="t"><i></i></span><button aria-label="向右"><svg width="6" height="10"><path d="M1 1l4 4-4 4" fill="none" stroke="#444" stroke-width="1.6"/></svg></button></div>`);

define('span-panel', `
  :host{display:flex;flex:none;height:200px;padding:2px 1px 0 1px}
  .side{width:12px;flex:none;display:flex;flex-direction:column;gap:4px}
  .side div{flex:1;background:radial-gradient(circle,#b0b0b0 1px,transparent 1px) 0 0/5px 5px;margin-right:2px}
  .main{flex:1;min-width:0;display:flex;flex-direction:column;gap:1px}`,
  `<div class="side"><button aria-label="关闭面板"><svg width="10" height="10"><path d="M.5.5h9v9h-9z" fill="#eee" stroke="#634"/><path d="M2 2l6 6M8 2L2 8" stroke="#222" stroke-width="1.4"/></svg></button><div></div></div>
  <div class="main"><tool-strip><tool-item icon="pages">复制跨数据</tool-item><tool-item icon="paste" disabled>粘贴跨数据</tool-item><tool-item>输入当前列数据</tool-item><tool-item>删除当前列数据</tool-item><tool-item>页面设置</tool-item><tool-item>调换起始跨</tool-item><tool-item>悬臂钢筋代号</tool-item></tool-strip><span-table></span-table></div>`);

/* ---------- status bar ---------- */
define('status-bar', `
  :host{display:flex;flex:none;gap:3px;height:23px;padding-top:3px;white-space:nowrap;${SYS}}
  span{border:1px solid #dcdcdc;border-bottom-color:#fff;padding-left:1px;background:#f4f4f4;overflow:hidden;height:20px;line-height:18px}
  .a{width:147px}.b{width:77px}.c{width:96px}.d{width:48px}.e{flex:1;min-width:0}.f{width:70px}`,
  `<span class="a">X=32732 Y=4836</span><span class="b">层高:4.5m</span><span class="c">底标高:-0.05m</span><span class="d">1(1)</span><span class="e">按鼠标左键选择梁图元,按右键或ESC退出;可以通过回车键及shift+"→←↑"光标键在跨之间、上下输入框之间进行切换</span><span class="f">23.7 FPS</span>`);

/* ---------- system task bar ---------- */
define('task-bar', `
  :host{display:flex;height:40px;flex:none;background:linear-gradient(90deg,#000 0,#01090c 35%,#01171a 60%,#010f12 80%,#000 100%);color:#fff;align-items:center;white-space:nowrap}
  button{height:40px;display:grid;place-items:center;flex:none}
  .win{width:48px}
  .s{display:flex;align-items:center;width:344px;height:40px;background:#333;padding:0 14px 0 9px;gap:6px}
  .s input{flex:1;min-width:0;border:0;background:none;outline:0;font-size:14px;padding:0}
  .s input::placeholder{color:#9a9a9a;opacity:1}
  .w{width:46px}.w1{width:51px}.on{background:#2f3d40;width:43px;box-shadow:inset 0 -3px #76b9ed}.run{box-shadow:inset 0 -3px #76b9ed;width:38px;margin:0 4px}
  .g{width:20px;display:grid;place-items:center}
  .col{text-align:center;line-height:17px}
  .lk{padding:0 6px 0 8px}
  .cpu{width:62px;margin-left:8px;margin-right:14px}
  .tray{display:flex;align-items:center;margin-left:auto;gap:10px}
  .clk{width:76px}
  .note{width:32px}.end{width:8px;margin-left:10px;border-left:1px solid #444;height:40px}`,
  () => {
    const gr = '<span class="g"><svg width="5" height="18"><path d="M.5 0v18M4.500 0v18" stroke="#3c4a4c"/></svg></span>';
    const e = c => `<svg width="24" height="24" viewBox="0 0 24 24"><path d="M4 13h15q1-9-7-9-6 0-9 7M4 13q0 8 8 8 4 0 7-2" fill="none" stroke="${c}" stroke-width="4"/></svg>`;
    return `<button class="win" aria-label="开始"><svg width="16" height="16"><path d="M0 2.500l7-1v6H0zM8 1.300L16 0v7.500H8zM0 8.500h7v6l-7-1zM8 8.500h8V16l-8-1.300z" fill="#fff"/></svg></button>
    <label class="s"><svg width="22" height="22"><circle cx="11" cy="11" r="9" fill="none" stroke="#fff" stroke-width="3"/></svg><input placeholder="在这里输入你要搜索的内容" aria-label="搜索"><svg width="14" height="18"><rect x="4.5" y=".5" width="5" height="10" rx="2.5" fill="none" stroke="#aaa"/><path d="M1.500 8q0 5 5.500 5t5.500-5M7 13v4M4 17h6" fill="none" stroke="#aaa"/></svg></label>
    <button class="w1" aria-label="任务视图"><svg width="20" height="16"><path d="M4.500.5h11v15h-11zM.5 3v10h2M19.500 3v10h-2M.5 3.500h2M19.500 3.500h-2" fill="none" stroke="#fff"/></svg></button>
    <button class="w1" aria-label="应用"><svg width="22" height="22"><g fill="#e4e4e4"><circle cx="7" cy="7" r="5.5"/><circle cx="15" cy="6" r="5"/><circle cx="6" cy="15" r="5.5"/><circle cx="15" cy="15" r="6"/></g><path d="M11 1q-4 4 0 9t0 11M2 10q5 3 9 0t9 1" stroke="#222" fill="none"/></svg></button>
    <button class="w1" aria-label="浏览器">${e('#e8e8e8')}</button>
    <button class="w1" aria-label="提醒"><svg width="28" height="28"><circle cx="12" cy="15" r="8" fill="none" stroke="#aaa" stroke-width="2"/><circle cx="13" cy="15" r="4" fill="none" stroke="#ccc" stroke-width="1.5"/><path d="M15 9q2-1 2-5q3-5 6 0q0 4 2 5z" fill="#f0b000"/><circle cx="20" cy="10" r="1.5" fill="#f0b000"/></svg></button>
    ${gr}<button class="w1" aria-label="Edge">${e('#1878d8')}</button>
    <button class="w" aria-label="IE"><svg width="26" height="26"><path d="M6 14h15q0-8-8-8t-8 8q0 7 8 7q4 0 6-3" fill="none" stroke="#48b0f0" stroke-width="4"/><path d="M3 22q-3-4 6-12T24 3" fill="none" stroke="#f4c430" stroke-width="2"/></svg></button>
    <button class="w" aria-label="文件夹"><svg width="22" height="20"><path d="M1 2h7l2 2h11v15H1z" fill="#f7d774"/><path d="M1 7h20v12H1z" fill="#fbe7a0"/><path d="M5 11h12v8h-3v-4H8v4H5z" fill="#3c9cd8"/></svg></button>
    <button class="run" aria-label="安全浏览器"><svg width="24" height="24"><circle cx="12" cy="12" r="11" fill="#4ab820"/><path d="M7 13h10q0-6-5-6t-5 6q0 5 5 5q3 0 4-2" fill="none" stroke="#fff" stroke-width="2.5"/></svg></button>
    <button class="run" aria-label="广联达"><svg width="24" height="24"><path d="M20 6Q12-1 5 6T6 20q8 5 14-2v-7h-8v3h4q-1 4-5 3t-4-6q1-6 6-5l5 3z" fill="#1ca4ec"/></svg></button>
    <button class="on" aria-label="钢筋算量">${svg('app', 24)}</button>
    ${gr}<span class="lk">链接</span><span class="col cpu">32%<br>CPU使用</span>
    <svg width="12" height="8"><path d="M1 7l5-5 5 5" fill="none" stroke="#fff" stroke-width="1.3"/></svg>
    <span class="tray"><svg width="16" height="12"><path d="M.5 2.500h13v7H.5z" fill="none" stroke="#fff"/><path d="M2 4h5v4H2zM14 4h2v4h-2z" fill="#fff"/></svg>
    <svg width="16" height="16"><path d="M2 14q0-11 11-12M6 15q0-8 8-9M10 15q0-4 4-5" fill="none" stroke="#ddd" stroke-width="1.3"/><circle cx="13" cy="14" r="1.5" fill="#fff"/></svg>
    <svg width="17" height="14"><path d="M.5 4.500h3l4-4v13l-4-4h-3z" fill="none" stroke="#fff"/><path d="M10 4q2 3 0 6M12 2q4 5 0 10" fill="none" stroke="#ddd"/></svg>
    <svg width="24" height="14"><rect x=".5" y=".5" width="22" height="12" fill="none" stroke="#fff"/><path d="M3 4h18M3 7h18" stroke="#fff" stroke-dasharray="2 1"/><path d="M6 10h12" stroke="#fff"/></svg>
    <span>中</span><svg width="16" height="16"><path d="M0 2l14-2 2 14-14 2z" fill="#ee4f20"/><path d="M12 4q-7-1-7 1t4 3q5 2 1 4t-6 0" fill="none" stroke="#fff" stroke-width="2"/></svg>
    <span class="col clk">10:35<br>2018/7/31</span></span>
    <button class="note" aria-label="通知"><svg width="16" height="16"><path d="M.5.5h15v11h-5l-3 4v-4h-7z" fill="none" stroke="#fff"/></svg></button><span class="end"></span>`;
  });

/* red hand-drawn marks over the page */
define('mark-ring', `
  :host{position:absolute;border:3px solid #f00;border-radius:50%;pointer-events:none;z-index:3}
  :host([for="tool"]){left:748px;top:119px;width:127px;height:76px}
  :host([for="cell"]){left:730px;top:557px;width:167px;height:66px}`, '');

/* ---------- whole window ---------- */
const T = s => s.trim().split(/\s+/).map(w => {
  if (w === '|') return '<tool-sep></tool-sep>';
  const [i, t, a = ''] = w.split(':');
  return `<tool-item icon="${i}" ${a.replace('+', ' ')}>${t}</tool-item>`;
}).join('');
const combo = (n, v, a = '') => `<tool-combo name="${n}" value="${v}" ${a}></tool-combo>`;
define('ggj-app', `
  :host{display:flex;flex-direction:column;height:100vh;position:relative;overflow:hidden}
  .row{display:flex;gap:3px;flex:none}
  .r1{height:31px;padding-top:1px;justify-content:flex-end}
  .r1 tool-strip{height:28px}.ad{width:187px;justify-content:center}.acct{width:240px}
  a{color:#2c6a00;text-decoration:none}
  .r2 tool-strip{height:28px}.q{flex:0 0 152px;margin-right:-2px}.m{flex:0 1 549px}.v{flex:1}.v tool-combo{margin-left:0;width:62px}
  .main{flex:1;min-height:0;display:flex;gap:5px;margin-top:2px}
  nav-panel{width:165px;flex:none}
  .work{flex:1;min-width:0;display:flex;flex-direction:column}
  .work .row{margin:0 0 2px 1px}
  .work .snap{margin-top:2px;gap:4px}.snap tool-strip{height:28px}
  .fill{flex:1}.tail{width:32px}.tail i{flex:1;height:26px;background:#fff;opacity:.7}
  label.ck{display:flex;align-items:center;gap:9px;padding:0 0 0 2px}
  .ck input{appearance:none;width:11px;height:11px;border:1px solid #999;background:#fff}`,
  `<title-bar></title-bar><ime-bar></ime-bar>
  <div class="row r1"><tool-strip class="ad"><a href="#">为什么筏板XY方向布置..</a></tool-strip><tool-strip class="acct" more>${T('user:13907298339:caret')}<tool-item>造价豆:0</tool-item><tool-item icon="bell" name="消息"></tool-item></tool-strip></div>
  <div class="row r2"><tool-strip class="q" more><tool-item icon="file" name="新建"></tool-item><tool-item icon="open" name="打开" caret></tool-item><tool-item icon="save" name="保存"></tool-item><tool-sep></tool-sep><tool-item icon="undo" name="撤销" caret></tool-item></tool-strip>
  <tool-strip class="m" more>${T('define:定义 sigma:汇总计算 cloud:云检查 align:平齐板顶 find:查找图元 view:查看钢筋量 batch:批量选择:disabled')}</tool-strip>
  <tool-strip class="v" more>${combo('视图', '二维', 'icon="rect"')}${T('cube:俯视:caret orbit:动态观察 part3d:局部三维 | full:全屏 zoom:缩放:caret pan:平移:caret spin:屏幕旋转:tight | floors:选择楼层')}</tool-strip></div>
  <div class="main"><nav-panel></nav-panel><div class="work">
    <div class="row"><tool-strip grip>${T('brush:删除 | copy:复制 mirror:镜像 | move:移动 rotate:旋转 | extend:延伸 trim:修剪 | brk:打断 join:合并 split:分割:disabled | left:对齐:tight offset:偏移 stretch:拉伸 | grip:设置夹点:disabled')}</tool-strip></div>
    <div class="row"><tool-strip grip>${combo('楼层', '首层', 'size="s"')}${combo('类型', '梁')}${combo('构件', '梁')}${combo('名称', 'KL-1b')}${combo('分层', '分层1')}${T('| prop:属性 editbar:编辑钢筋 list:构件列表 pick:拾取构件')}</tool-strip><tool-strip grip>${T('twopt:两点 parallel:平行 ptangle:点角:caret arcaxis:三点辅轴:caret brush:删除辅轴 dim:尺寸标注:caret')}</tool-strip></div>
    <div class="row"><tool-strip grip more class="fill">${T('cursor:选择:caret | line:直线 ptlen:点加长度 arc3:三点画弧:caret')}${combo('附加', '', 'size="xs"')}${T('rect:矩形 | smart:智能布置:tight | beamedit:修改梁段属性 insitu:原位标注:active+caret respan:重提梁跨:caret broom:梁跨数据复制:caret recog:批量识别梁支座 apply:应用到同名梁')}</tool-strip><tool-strip grip class="tail"><i></i></tool-strip></div>
    <cad-canvas></cad-canvas>
    <div class="row snap"><tool-strip grip>${T('ortho:正交 snap:对象捕捉:active dyn:动态输入')}</tool-strip><tool-strip grip>${T('cross:交点 perp:垂点:active mid:中点:active penta:顶点 coord:坐标')}</tool-strip><tool-strip grip>${combo('偏移', '不偏移', 'size="s"')}<tool-sep></tool-sep><num-field label="X=" value="0" unit="mm"></num-field><num-field label="Y=" value="0" unit="mm"></num-field><tool-sep></tool-sep><label class="ck"><input type="checkbox">旋转</label><num-field label="" wide value="0.000" unit="°"></num-field></tool-strip></div>
    <span-panel></span-panel>
  </div></div>
  <status-bar></status-bar><task-bar></task-bar>
  <mark-ring for="tool"></mark-ring><mark-ring for="cell"></mark-ring>`);
</script>
</body>
</html>
